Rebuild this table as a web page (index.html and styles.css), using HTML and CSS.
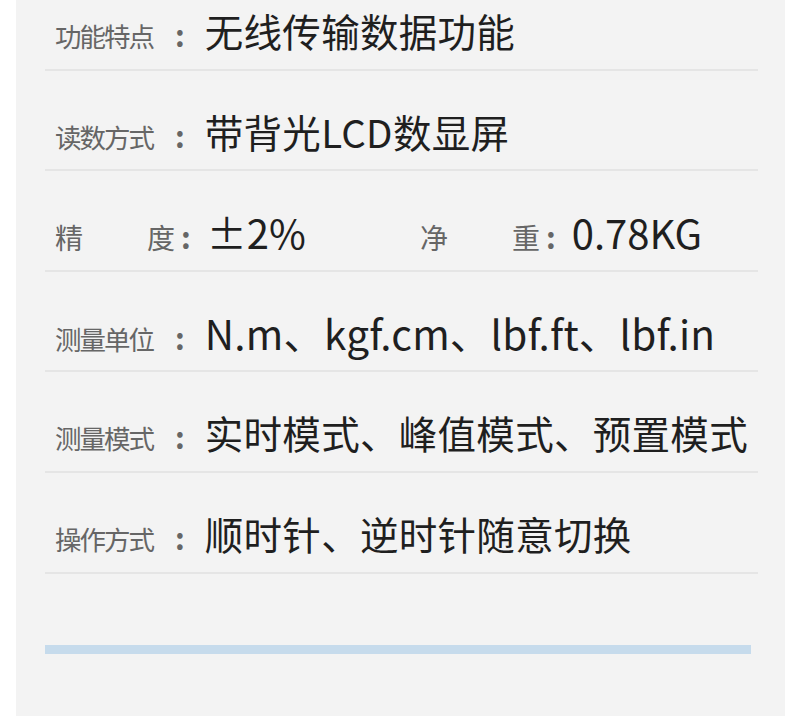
FILE: index.html
```html
<!DOCTYPE html>
<html lang="zh-CN">
<head>
  <meta charset="UTF-8" />
  <meta name="viewport" content="width=device-width, initial-scale=1.0"/>
  <title>产品参数</title>
  <link rel="stylesheet" href="styles.css">
</head>
<body>
  <div class="panel">
    <div class="specs">
      <div class="row">
        <span class="label">功能特点</span><span class="colon">:</span>
        <span class="value">无线传输数据功能</span>
      </div>
      <div class="row">
        <span class="label">读数方式</span><span class="colon">:</span>
        <span class="value">带背光LCD数显屏</span>
      </div>
      <div class="row">
        <div class="pair">
          <span class="label label-wide">精度</span><span class="colon colon-near">:</span>
          <span class="value value-num">±2%</span>
        </div>
        <div class="pair">
          <span class="label label-wide">净重</span><span class="colon colon-near">:</span>
          <span class="value value-num">0.78KG</span>
        </div>
      </div>
      <div class="row">
        <span class="label">测量单位</span><span class="colon">:</span>
        <span class="value value-latin">N.m、kgf.cm、lbf.ft、lbf.in</span>
      </div>
      <div class="row">
        <span class="label">测量模式</span><span class="colon">:</span>
        <span class="value">实时模式、峰值模式、预置模式</span>
      </div>
      <div class="row">
        <span class="label">操作方式</span><span class="colon">:</span>
        <span class="value">顺时针、逆时针随意切换</span>
      </div>
    </div>
    <div class="bar"></div>
  </div>
</body>
</html>
```

FILE: styles.css
```css
body {
  margin: 0;
  background: #ffffff;
  font-family: "Noto Sans CJK SC", "Noto Sans", sans-serif;
}

.panel {
  margin: 0 15px 0 16px;
  height: 716px;
  background: #f3f3f3;
  padding: 0 27px 0 29px;
  overflow: hidden;
}

.specs {
  margin-top: -30px;
}

.row {
  box-sizing: border-box;
  height: 100.6px;
  padding: 37px 0 0 10px;
  border-bottom: 2px solid #e5e5e5;
  display: flex;
  align-items: baseline;
  line-height: 1.2;
}

.pair {
  display: flex;
  align-items: baseline;
  flex: none;
  width: 365px;
}

.label {
  flex: none;
  font-size: 26.5px;
  letter-spacing: -2px;
  color: #666666;
}

.label-wide {
  display: inline-block;
  width: 120px;
  font-size: 28px;
  letter-spacing: 0;
  text-align-last: justify;
}

.colon {
  flex: none;
  font-size: 30px;
  font-weight: bold;
  color: #666666;
  margin: 0 20px 0 22px;
}

.colon-near {
  margin: 0 16px 0 6px;
}

.value {
  flex: none;
  font-size: 38.5px;
  letter-spacing: 0.3px;
  color: #1f1f1f;
}

.value-num {
  font-size: 40px;
  letter-spacing: 0;
}

.value-latin {
  font-size: 40.5px;
  letter-spacing: 0.2px;
}

.bar {
  margin-top: 71px;
  width: 706px;
  height: 9px;
  background: #c6dbec;
}
```
